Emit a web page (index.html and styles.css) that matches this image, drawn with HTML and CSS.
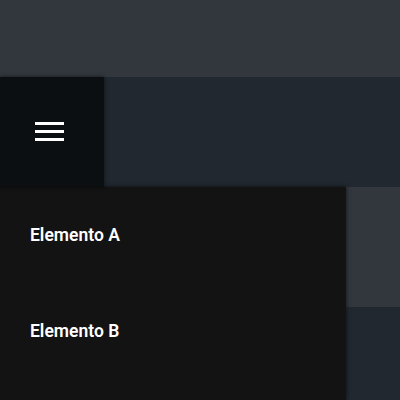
FILE: index.html
```html
<!DOCTYPE html>
<html lang="en">

<head>
	<title>Menu</title>
	<link rel="stylesheet" href="styles.css">
</head>

<body>

	<header class="topbar"></header>

	<div class="toolbar">
		<button class="menu-btn" aria-label="Menu">
			<svg width="29" height="19" viewBox="0 0 29 19">
				<rect x="0" y="0" width="29" height="3" fill="#fff"/>
				<rect x="0" y="8" width="29" height="3" fill="#fff"/>
				<rect x="0" y="16" width="29" height="3" fill="#fff"/>
			</svg>
		</button>
		<div class="toolbar-fill"></div>
	</div>

	<main class="content">
		<div class="panel"></div>
		<div class="rest"></div>

		<nav class="drawer">
			<a class="drawer-item" href="#">Elemento A</a>
			<a class="drawer-item" href="#">Elemento B</a>
		</nav>
	</main>

</body>

</html>
```

FILE: styles.css
```css
:root {
	--top-color: #31373d;
	--fill-color: #21282f;
	--button-color: #0c0f11;
	--drawer-color: #131313;
	--text-color: #ffffff;
}
html, body { margin: 0; height: 100%; }
body {
	background: var(--fill-color);
	font-family: Roboto, "Liberation Sans", sans-serif;
	display: flex;
	flex-direction: column;
	overflow: hidden;
}
.topbar { height: 77px; background: var(--top-color); flex: none; }
.toolbar { height: 110px; display: flex; flex: none; }
.menu-btn {
	width: 104px;
	border: none;
	padding: 0 5px 1px 0;
	background: var(--button-color);
	display: flex;
	align-items: center;
	justify-content: center;
	box-shadow: 0 0 4px rgba(0, 0, 0, 0.6);
	position: relative;
	z-index: 1;
}
.toolbar-fill { flex: 1; background: var(--fill-color); }
.content { flex: 1; position: relative; display: flex; flex-direction: column; }
.panel { height: 120px; background: var(--top-color); }
.rest { flex: 1; background: var(--fill-color); }
.drawer {
	position: absolute;
	top: 0;
	left: 0;
	bottom: 0;
	width: 346px;
	background: var(--drawer-color);
	box-shadow: 0 0 4px rgba(0, 0, 0, 0.7);
	display: flex;
	flex-direction: column;
}
.drawer-item {
	height: 96px;
	display: flex;
	align-items: center;
	padding-left: 30px;
	color: var(--text-color);
	text-decoration: none;
	font-size: 17.5px;
	font-weight: 600;
}
```
